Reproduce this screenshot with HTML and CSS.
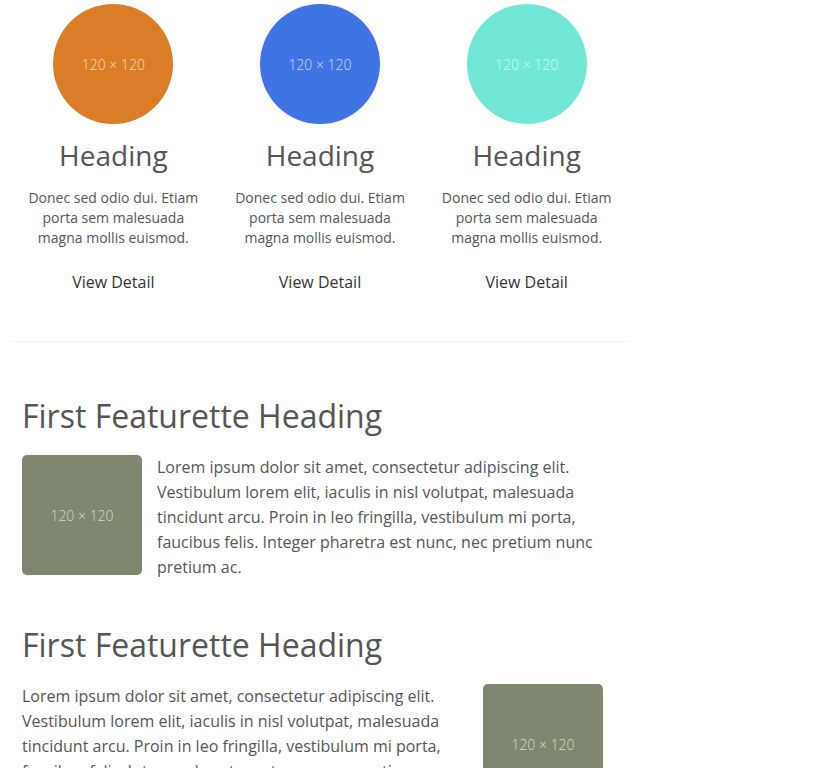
FILE: index.html
```html
<!DOCTYPE html>
<html lang="en">
<head>
<meta charset="utf-8">
<title>Marketing</title>
<link rel="stylesheet" href="styles.css">
</head>
<body>
<div class="container">
  <div class="marketing">
    <div class="col">
      <div class="circle orange"><span>120 × 120</span></div>
      <h2 class="col-title">Heading</h2>
      <p class="col-text">Donec sed odio dui. Etiam porta sem malesuada magna mollis euismod.</p>
      <a class="detail" href="#">View Detail</a>
    </div>
    <div class="col">
      <div class="circle blue"><span>120 × 120</span></div>
      <h2 class="col-title">Heading</h2>
      <p class="col-text">Donec sed odio dui. Etiam porta sem malesuada magna mollis euismod.</p>
      <a class="detail" href="#">View Detail</a>
    </div>
    <div class="col">
      <div class="circle teal"><span>120 × 120</span></div>
      <h2 class="col-title">Heading</h2>
      <p class="col-text">Donec sed odio dui. Etiam porta sem malesuada magna mollis euismod.</p>
      <a class="detail" href="#">View Detail</a>
    </div>
  </div>

  <hr class="divider">

  <section class="featurette first">
    <h2 class="feat-title">First Featurette Heading</h2>
    <div class="feat-body">
      <div class="thumb"><span>120 × 120</span></div>
      <p class="feat-text">Lorem ipsum dolor sit amet, consectetur adipiscing elit. Vestibulum lorem elit, iaculis in nisl volutpat, malesuada tincidunt arcu. Proin in leo fringilla, vestibulum mi porta, faucibus felis. Integer pharetra est nunc, nec pretium nunc pretium ac.</p>
    </div>
  </section>

  <section class="featurette second">
    <h2 class="feat-title">First Featurette Heading</h2>
    <div class="feat-body">
      <p class="feat-text">Lorem ipsum dolor sit amet, consectetur adipiscing elit. Vestibulum lorem elit, iaculis in nisl volutpat, malesuada tincidunt arcu. Proin in leo fringilla, vestibulum mi porta, faucibus felis. Integer pharetra est nunc, nec pretium nunc pretium ac.</p>
      <div class="thumb"><span>120 × 120</span></div>
    </div>
  </section>
</div>
</body>
</html>
```

FILE: styles.css
```css
html, body {
  margin: 0;
  padding: 0;
  background: #ffffff;
}

body {
  font-family: "Open Sans", "Liberation Sans", sans-serif;
  color: #555555;
  overflow: hidden;
}

.container {
  width: 620px;
  margin-left: 10px;
  padding-top: 4px;
}

.marketing {
  display: grid;
  grid-template-columns: repeat(3, 1fr);
}

.col {
  display: flex;
  flex-direction: column;
  align-items: center;
  text-align: center;
  padding: 0 15px;
}

.circle {
  width: 120px;
  height: 120px;
  border-radius: 50%;
  display: flex;
  align-items: center;
  justify-content: center;
}

.circle span,
.thumb span {
  font-size: 14px;
  font-weight: 300;
  color: rgba(255, 255, 255, 0.75);
}

.orange { background: #db7d26; }
.blue { background: #3f74e4; }
.teal { background: #71e8d6; }

.col-title {
  margin: 14px 0 0;
  font-size: 28px;
  line-height: 34px;
  font-weight: 400;
  color: #555555;
}

.col-text {
  margin: 16px 0 0;
  font-size: 14px;
  line-height: 20px;
  color: #555555;
}

.detail {
  margin-top: 23px;
  font-size: 16px;
  line-height: 22px;
  color: #333333;
  text-decoration: none;
}

.divider {
  margin: 48px 0 0;
  border: 0;
  border-top: 1px solid #f4f4f4;
  height: 0;
}

.featurette {
  width: 581px;
  margin-left: 12px;
}

.featurette.first {
  margin-top: 54px;
}

.featurette.second {
  margin-top: 45px;
}

.feat-title {
  margin: 0;
  font-size: 32px;
  line-height: 40px;
  font-weight: 400;
  color: #555555;
}

.feat-body {
  display: flex;
  align-items: flex-start;
  gap: 15px;
  margin-top: 19px;
}

.thumb {
  flex: 0 0 120px;
  width: 120px;
  height: 120px;
  border-radius: 5px;
  background: #7e876f;
  display: flex;
  align-items: center;
  justify-content: center;
}

.thumb span {
  color: rgba(255, 255, 255, 0.7);
}

.feat-text {
  flex: 1;
  margin: 0;
  font-size: 16px;
  line-height: 25px;
  color: #555555;
}
```
